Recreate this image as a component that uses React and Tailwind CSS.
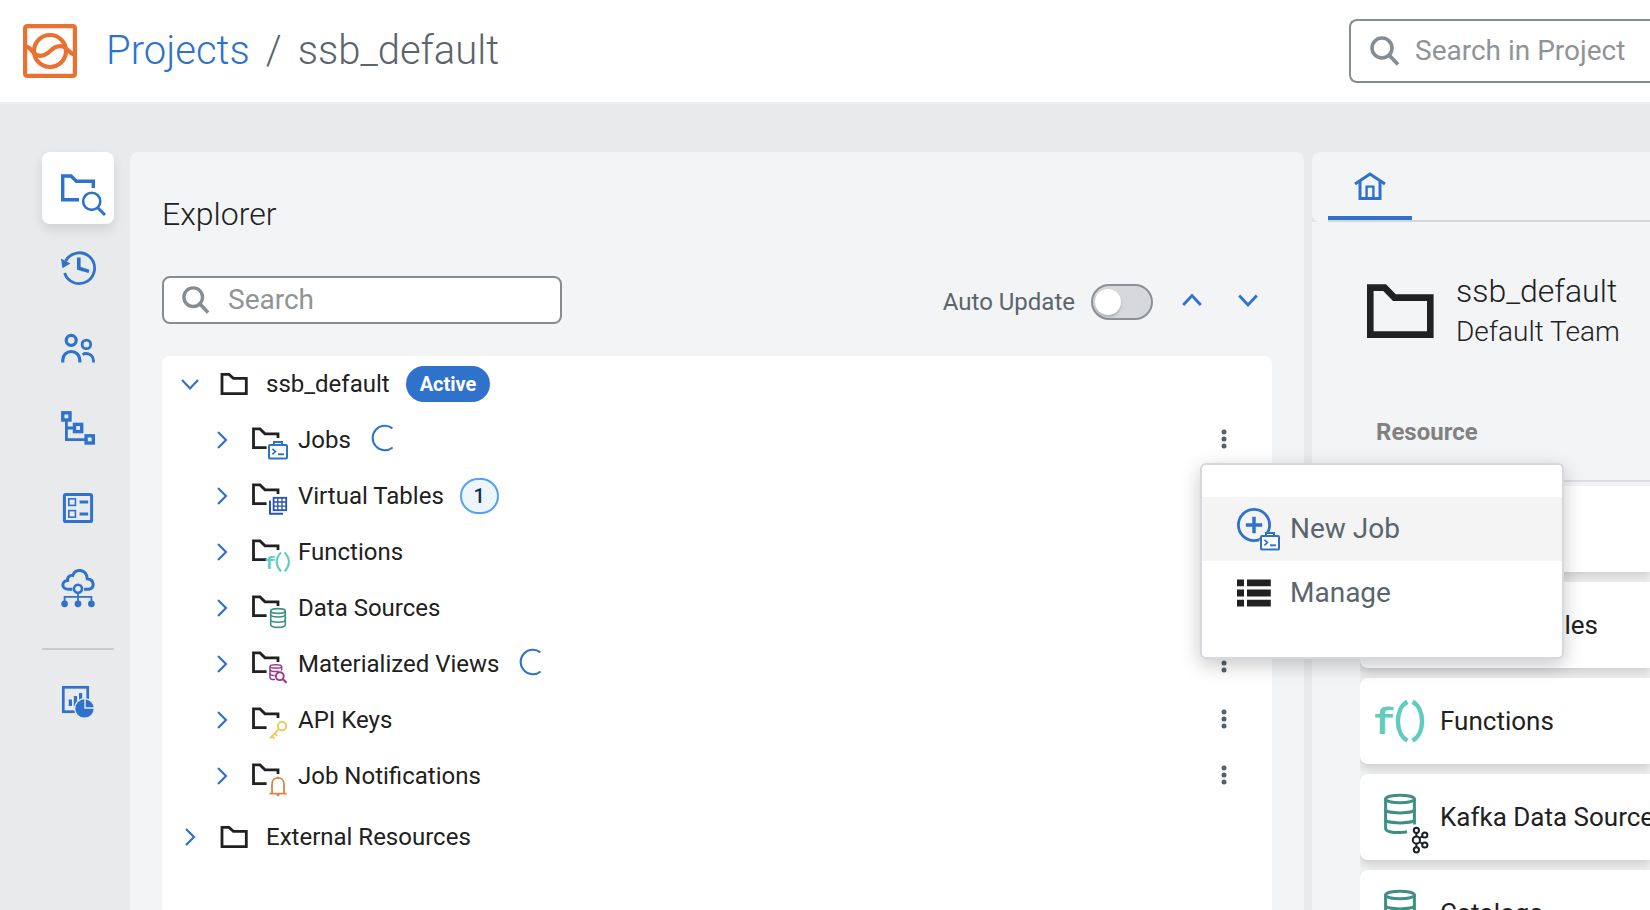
import React from "react";

const BLUE = "#2f72cc";
const INK = "#212121";

/* ---------- shared glyphs ---------- */

function SearchGlyph({ className }) {
  return (
    <svg className={className} viewBox="0 0 30 30" fill="none" stroke="#858d93" aria-hidden="true">
      <circle cx="12" cy="12" r="10" strokeWidth="3.6" />
      <path d="M19 19L28 28.5" strokeWidth="3.8" />
    </svg>
  );
}

function Chevron({ dir = "right", className = "", width = 2.2 }) {
  const d = {
    right: "M6 2L14 10L6 18",
    down: "M2 6L10 14.5L18 6",
    up: "M2 14.5L10 6L18 14.5",
  }[dir];
  return (
    <svg className={className} viewBox="0 0 20 20" fill="none" stroke={BLUE} strokeWidth={width} aria-hidden="true">
      <path d={d} />
    </svg>
  );
}

function CaseShape({ x, y }) {
  return (
    <g transform={`translate(${x} ${y})`} fill="none" stroke={BLUE} strokeWidth="2">
      <rect x="1" y="4" width="18" height="13.4" rx="1" fill="#fff" />
      <path d="M6 4V1H14V4" />
      <path d="M4.4 7.8L7.4 10.6L4.4 13.4" strokeWidth="1.7" />
      <path d="M10 13.3H16" strokeWidth="1.9" />
    </g>
  );
}

/* ---------- sidebar icons, drawn on a 72px tile ---------- */

const NAV_ICONS = {
  explorer: (
    <g fill="none" stroke={BLUE}>
      <path d="M51.3 36V29.3H34.5L29 24H20.7V47.7H37" strokeWidth="3.4" />
      <circle cx="49.7" cy="49.3" r="8.6" strokeWidth="2.6" />
      <path d="M56 56L63 63" strokeWidth="3" />
    </g>
  ),
  history: (
    <g fill="none" stroke={BLUE}>
      <path d="M22.6 41A15.4 15.4 0 1 0 23.6 29" strokeWidth="2.8" />
      <path d="M36.8 25.5V36.3L47 39.4" strokeWidth="3.6" />
      <path d="M19 26.6L28.4 31.4L20.4 36.2Z" fill={BLUE} stroke="none" />
    </g>
  ),
  team: (
    <g fill="none" stroke={BLUE}>
      <circle cx="29.2" cy="28.3" r="5" strokeWidth="3.2" />
      <path d="M20.8 50.4V48a8.5 8.5 0 0 1 17 0V50.4" strokeWidth="3.2" />
      <circle cx="44.4" cy="32.4" r="4.3" strokeWidth="2.8" />
      <path d="M40.6 42.6C41.8 41.8 43 41.5 44.3 41.5A7.2 7.2 0 0 1 51.5 48.7V50.4" strokeWidth="2.8" />
    </g>
  ),
  flow: (
    <g fill="none" stroke={BLUE} strokeWidth="3.4">
      <rect x="20.8" y="20.8" width="7.2" height="7.2" />
      <rect x="32.5" y="32.4" width="7.2" height="7.2" />
      <rect x="44.1" y="43.8" width="7.2" height="7.2" />
      <path d="M24.4 28V47.7H44M24.4 36H32" strokeWidth="2.8" />
    </g>
  ),
  list: (
    <g fill="none" stroke={BLUE}>
      <rect x="22.4" y="22.4" width="27.2" height="27.2" rx="1.4" strokeWidth="3" />
      <rect x="26.8" y="26.8" width="6.6" height="6.6" strokeWidth="1.6" />
      <rect x="26.8" y="38.6" width="6.6" height="6.6" strokeWidth="1.6" />
      <path d="M37.6 30.1H46.2M37.6 42H46.2" strokeWidth="3" />
    </g>
  ),
  cloud: (
    <g fill="none" stroke={BLUE}>
      <path
        d="M30.4 37.3H26.5C18.8 37.3 19.4 28.8 25.6 28.4C25.2 25 28 23 30.8 23.4C33 16 44.4 16.6 45.3 26.8C53 27.6 52.8 37.3 46.5 37.3H42"
        strokeWidth="3"
      />
      <circle cx="36" cy="36.7" r="4" strokeWidth="2.6" />
      <path d="M36 41V51M22.6 51V44.8H49.4V51" strokeWidth="1.8" />
      <g fill={BLUE} stroke="none">
        <circle cx="22.6" cy="51.8" r="3.4" />
        <circle cx="36" cy="51.8" r="3.4" />
        <circle cx="49.4" cy="51.8" r="3.4" />
      </g>
    </g>
  ),
  report: (
    <g>
      <rect x="21.3" y="21.3" width="24.4" height="24.4" fill="none" stroke={BLUE} strokeWidth="2.7" />
      <path d="M26.7 33.5H30V40H26.7ZM31.8 30H35.1V40H31.8ZM37 27H40.2V35H37Z" fill={BLUE} />
      <circle cx="42.5" cy="42.4" r="10.5" fill="#e9eaec" />
      <circle cx="42.5" cy="42.4" r="9.2" fill={BLUE} />
      <path d="M43 32V42H53" fill="none" stroke="#e9eaec" strokeWidth="1.4" />
    </g>
  ),
};

function NavButton({ icon, label, active }) {
  return (
    <button
      type="button"
      aria-label={label}
      className={
        active
          ? "h-[72px] w-[72px] rounded-lg bg-white shadow-[0_6px_12px_rgba(0,0,0,0.10)]"
          : "h-[72px] w-[72px] rounded-lg"
      }
    >
      <svg className="h-[72px] w-[72px]" viewBox="0 0 72 72" aria-hidden="true">
        {NAV_ICONS[icon]}
      </svg>
    </button>
  );
}

/* ---------- tree icons ---------- */

function Folder({ className }) {
  return (
    <svg className={className} viewBox="0 0 28 24" fill="none" stroke={INK} strokeWidth="2.8" aria-hidden="true">
      <path d="M2 2.4H9L13.4 6.4H26.3V21.6H2Z" />
    </svg>
  );
}

const TREE_BADGES = {
  jobs: <CaseShape x={16} y={21} />,
  tables: (
    <g fill="none" stroke="#2a52b0">
      <rect x="21.6" y="21.8" width="12.6" height="12.4" strokeWidth="1.8" />
      <path d="M25.8 22V34M30 22V34M22 26H34M22 30.2H34" strokeWidth="1.3" />
      <path d="M18 24.6V37.8H31" strokeWidth="2" />
    </g>
  ),
  functions: (
    <g fill="none" stroke="#5fccbe">
      <text x="12.5" y="37" fontFamily="Liberation Mono, monospace" fontWeight="700" fontSize="19" fill="#5fccbe" stroke="none">
        f
      </text>
      <path d="M29 20.4Q20.4 30 29 39.4M32.6 20.4Q41.2 30 32.6 39.4" strokeWidth="2.1" />
    </g>
  ),
  sources: (
    <g fill="none" stroke="#3f9083" strokeWidth="1.6">
      <ellipse cx="26" cy="23" rx="7.3" ry="2.4" />
      <path d="M18.7 23V36.8C18.7 40.2 33.3 40.2 33.3 36.8V23" />
      <path d="M18.7 26.6C18.7 29.8 33.3 29.8 33.3 26.6M18.7 31.8C18.7 35 33.3 35 33.3 31.8" />
    </g>
  ),
  views: (
    <g fill="none" stroke="#9b3a8a" strokeWidth="1.5">
      <ellipse cx="23.8" cy="22.4" rx="5.8" ry="1.7" />
      <path d="M18 22.4V33.4C18 35 20.5 35.6 23 35.6M29.6 22.4V26.5" />
      <path d="M18 25.6C18 27.6 24 28 26.6 27.2M18 29.6C18 31 20.4 31.6 22.6 31.6" />
      <circle cx="27.8" cy="32.2" r="3.9" strokeWidth="1.9" />
      <path d="M30.6 35L34.6 38.8" strokeWidth="2.2" />
    </g>
  ),
  keys: (
    <g fill="none" stroke="#f0c95c" strokeWidth="1.9">
      <circle cx="30" cy="26" r="4.2" />
      <path d="M26.8 29.2L18 38.4M19.6 36L22.4 38.6M22.4 33L25.2 35.8" />
    </g>
  ),
  bell: (
    <g fill="none" stroke="#e0813d">
      <path d="M20 37V28.3C20 19.8 32 19.8 32 28.3V37" strokeWidth="1.8" />
      <path d="M17.4 37.6H34.6" strokeWidth="1.7" />
      <circle cx="26" cy="38.8" r="1.5" fill="#e0813d" stroke="none" />
      <path d="M25 21.6H27" strokeWidth="1.6" />
    </g>
  ),
};

function TreeIcon({ kind }) {
  return (
    <svg className="h-10 w-10 shrink-0 overflow-visible" viewBox="0 0 40 40" aria-hidden="true">
      <path d="M26 18V13.8H13L8 8.9H1.5V27.7H14.6" fill="none" stroke={INK} strokeWidth="2.8" />
      {TREE_BADGES[kind]}
    </svg>
  );
}

function Spinner() {
  return (
    <svg className="-mt-1 ml-[18px] h-7 w-7 shrink-0" viewBox="0 0 28 28" fill="none" stroke={BLUE} strokeWidth="2" role="status" aria-label="Loading">
      <path d="M23.4 4.4A12.2 12.2 0 1 0 23.6 23.4" />
    </svg>
  );
}

function MoreButton({ label }) {
  return (
    <button type="button" aria-label={label} className="flex h-[46px] w-12 items-center justify-center">
      <svg className="h-6 w-3" viewBox="0 0 12 24" fill="#56606a" aria-hidden="true">
        <circle cx="6" cy="4" r="2.5" />
        <circle cx="6" cy="11" r="2.5" />
        <circle cx="6" cy="18" r="2.5" />
      </svg>
    </button>
  );
}

function JobMenu() {
  return (
    <div
      role="menu"
      className="absolute left-0 top-full z-10 w-[364px] rounded-md border-2 border-[#d6d8de] bg-white py-8 shadow-[0_6px_20px_rgba(0,0,0,0.22)]"
    >
      <button type="button" role="menuitem" className="flex h-16 w-full items-center gap-1.5 bg-[#f4f4f4] pl-[34px] text-[28px] text-[#5a656d]">
        <svg className="h-12 w-12 shrink-0 overflow-visible" viewBox="0 0 48 48" aria-hidden="true">
          <circle cx="18" cy="20" r="15.6" fill="none" stroke={BLUE} strokeWidth="2.8" />
          <path d="M18 11.8V28.2M9.8 20H26.2" stroke={BLUE} strokeWidth="3.5" />
          <circle cx="34" cy="37.3" r="10.6" fill="#fff" />
          <CaseShape x={24} y={27} />
        </svg>
        New Job
      </button>
      <button type="button" role="menuitem" className="flex h-16 w-full items-center gap-1.5 pl-[34px] text-[28px] text-[#5a656d]">
        <svg className="h-12 w-12 shrink-0" viewBox="0 0 48 48" fill={INK} aria-hidden="true">
          <path d="M1 10.4H8V17.2H1ZM11 10.4H34.8V17.2H11ZM1 20.6H8V27.4H1ZM11 20.6H34.8V27.4H11ZM1 30.7H8V37.5H1ZM11 30.7H34.8V37.5H11Z" />
        </svg>
        Manage
      </button>
    </div>
  );
}

const TREE = [
  { kind: "jobs", label: "Jobs", loading: true, menuOpen: true },
  { kind: "tables", label: "Virtual Tables", count: 1 },
  { kind: "functions", label: "Functions" },
  { kind: "sources", label: "Data Sources" },
  { kind: "views", label: "Materialized Views", loading: true },
  { kind: "keys", label: "API Keys" },
  { kind: "bell", label: "Job Notifications" },
];

function TreeRow({ item }) {
  return (
    <li className="flex h-14 items-center pl-[50px] pr-6">
      <button type="button" aria-label={`Expand ${item.label}`} className="mr-5 shrink-0">
        <Chevron className="h-5 w-5" />
      </button>
      <TreeIcon kind={item.kind} />
      <span className="ml-[6px] whitespace-nowrap">{item.label}</span>
      {item.loading && <Spinner />}
      {item.count && (
        <span className="ml-4 flex h-9 w-[39px] items-center justify-center rounded-full border-2 border-[#559ff5] bg-[#edf6ff] text-xl font-medium text-[#12304f]">
          {item.count}
        </span>
      )}
      <div className="relative ml-auto">
        <MoreButton label={`${item.label} actions`} />
        {item.menuOpen && <JobMenu />}
      </div>
    </li>
  );
}

/* ---------- resource list ---------- */

function Database() {
  return (
    <g fill="none" stroke="#3f9083" strokeWidth="3">
      <ellipse cx="24" cy="18" rx="14.4" ry="3.8" />
      <path d="M9.6 18V47.5C9.6 50.4 16 51.8 24 51.6C26.6 51.5 28.6 51.4 31 50.8" />
      <path d="M38.4 18V43.5" />
      <path d="M9.6 28.5C9.6 33 38.4 33 38.4 28.5M9.6 38.5C9.6 43 38.4 43 38.4 38.5" />
    </g>
  );
}

const RESOURCE_ICONS = {
  jobs: (
    <g transform="translate(4 16) scale(2)">
      <CaseShape x={0} y={0} />
    </g>
  ),
  tables: (
    <g fill="none" stroke="#2a52b0">
      <rect x="14" y="20" width="26" height="26" strokeWidth="3" />
      <path d="M23 20V46M31 20V46M14 29H40M14 37H40" strokeWidth="2" />
      <path d="M8 26V52H34" strokeWidth="3" />
    </g>
  ),
  functions: (
    <g fill="none" stroke="#5fccbe">
      <text x="-3" y="49" fontFamily="Liberation Mono, monospace" fontWeight="700" fontSize="37" fill="#5fccbe" stroke="none">
        f
      </text>
      <path d="M31.4 16.8C18.8 23.6 18.8 48.8 31.4 55.6M36.6 16.8C49.2 23.6 49.2 48.8 36.6 55.6" strokeWidth="4.4" />
    </g>
  ),
  kafka: (
    <g>
      <Database />
      <g fill="#fff" stroke="#1b2026" strokeWidth="2">
        <path d="M40.4 51V66M40.4 59L48.4 54M40.4 59L48.4 64" />
        <circle cx="40.4" cy="49.3" r="2.6" />
        <circle cx="40.4" cy="59" r="3.6" />
        <circle cx="40.4" cy="68.8" r="2.6" />
        <circle cx="48.8" cy="54" r="2.6" />
        <circle cx="48.8" cy="64" r="2.6" />
      </g>
    </g>
  ),
  catalogs: <Database />,
};

const RESOURCES = [
  { icon: "jobs", label: "Jobs" },
  { icon: "tables", label: "Virtual Tables" },
  { icon: "functions", label: "Functions" },
  { icon: "kafka", label: "Kafka Data Sources" },
  { icon: "catalogs", label: "Catalogs" },
];

export default function App() {
  return (
    <div className="flex h-screen flex-col overflow-hidden bg-[#e9eaec] font-['Roboto',sans-serif] text-2xl text-[#212121]">
      <header className="flex shrink-0 items-center justify-between border-b-2 border-[#f0f1f3] bg-white pb-[19px] pl-[23px] pt-[19px]">
        <div className="flex items-center">
          <svg className="h-[54px] w-[54px] shrink-0" viewBox="0 0 54 54" fill="none" stroke="#ea7130" aria-hidden="true">
            <rect x="2.1" y="2.1" width="49.8" height="49.8" rx="2" strokeWidth="4.2" />
            <circle cx="27" cy="27" r="16" strokeWidth="4.2" />
            <path
              d="M3 22.6C6.5 23 8 25.6 10.4 28.4C14 32.6 20 33 24.6 29.2C29 25.4 32.6 21.2 38.8 22.2C44.6 23.2 45.6 29 51 30.6"
              strokeWidth="4.2"
            />
          </svg>
          <nav aria-label="Breadcrumb" className="ml-[29px] flex gap-4 whitespace-nowrap text-[40px] font-light leading-[48px] text-[#5a656d]">
            <a href="#projects" className="text-[#2f72cc]">Projects</a>
            <span>/</span>
            <span>ssb_default</span>
          </nav>
        </div>
        <label className="flex h-16 w-[301px] items-center gap-[15px] rounded-l-lg border-2 border-r-0 border-[#858d93] bg-white pl-[19px]">
          <SearchGlyph className="h-[30px] w-[30px] shrink-0" />
          <input
            type="text"
            aria-label="Search in Project"
            placeholder="Search in Project"
            className="min-w-0 flex-1 text-[28px] outline-none placeholder:text-[#8f9498]"
          />
        </label>
      </header>

      <main className="flex min-h-0 flex-1 pl-[42px] pt-12">
        <nav aria-label="Tools" className="mr-4 flex w-[72px] shrink-0 flex-col gap-2">
          <NavButton icon="explorer" label="Explorer" active />
          <NavButton icon="history" label="History" />
          <NavButton icon="team" label="Team" />
          <NavButton icon="flow" label="Flow" />
          <NavButton icon="list" label="Templates" />
          <NavButton icon="cloud" label="Connections" />
          <hr className="mb-2 mt-4 border-t-2 border-[#cbccd0]" />
          <NavButton icon="report" label="Reports" />
        </nav>

        <div className="grid min-w-0 flex-1 grid-cols-[minmax(0,1174fr)_minmax(0,338fr)] gap-2">
          <section className="z-10 flex min-h-0 flex-col rounded-t-lg bg-[#f3f4f6] px-8 pt-10">
            <h1 className="text-[32px] font-light leading-[44px]">Explorer</h1>
            <div className="mt-10 flex h-12 items-center">
              <label className="flex h-12 w-[400px] items-center gap-[18px] rounded-lg border-2 border-[#858d93] bg-white pl-[18px]">
                <SearchGlyph className="h-7 w-7 shrink-0" />
                <input
                  type="text"
                  aria-label="Search"
                  placeholder="Search"
                  className="min-w-0 flex-1 text-[28px] leading-10 outline-none placeholder:text-[#8f9498]"
                />
              </label>
              <label className="ml-auto flex items-center gap-4 pt-1 text-[#5a656d]">
                Auto Update
                <input
                  type="checkbox"
                  role="switch"
                  className="h-9 w-[62px] appearance-none rounded-full border-2 border-[#8b9196] bg-[#d7d8dc] px-[2px] py-[3px] before:block before:h-[26px] before:w-[26px] before:rounded-full before:bg-white before:shadow-[0_2px_3px_rgba(0,0,0,0.2)] before:content-['']"
                />
              </label>
              <button type="button" aria-label="Collapse all" className="ml-[27px] p-px">
                <Chevron dir="up" className="h-[22px] w-[22px]" width={2.6} />
              </button>
              <button type="button" aria-label="Expand all" className="ml-8 mr-3 p-px">
                <Chevron dir="down" className="h-[22px] w-[22px]" width={2.6} />
              </button>
            </div>

            <div className="mt-8 flex-1 rounded-t-lg bg-white">
              <div className="flex h-14 items-center pl-[18px]">
                <button type="button" aria-label="Collapse ssb_default" className="mr-5 shrink-0">
                  <Chevron dir="down" className="h-5 w-5" />
                </button>
                <Folder className="h-6 w-7 shrink-0" />
                <span className="ml-[18px]">ssb_default</span>
                <span className="ml-4 flex h-9 items-center rounded-full bg-[#2f72cc] px-[14px] text-xl font-bold text-white">Active</span>
              </div>
              <ul>
                {TREE.map((item) => (
                  <TreeRow key={item.kind} item={item} />
                ))}
              </ul>
              <div className="mt-[5px] flex h-14 items-center pl-[18px]">
                <button type="button" aria-label="Expand External Resources" className="mr-5 shrink-0">
                  <Chevron className="h-5 w-5" />
                </button>
                <Folder className="h-6 w-7 shrink-0" />
                <span className="ml-[18px]">External Resources</span>
              </div>
            </div>
          </section>

          <section className="flex min-h-0 flex-col overflow-hidden rounded-tl-lg bg-[#f3f4f6]">
            <div className="shrink-0 bg-[#e3e4e6]">
              <div role="tablist" className="rounded-l-lg bg-[#f3f4f6] pl-4">
                <div className="border-b-2 border-[#d5d6d9]">
                  <button
                    type="button"
                    role="tab"
                    aria-selected="true"
                    aria-label="Home"
                    className="flex h-[68px] w-[84px] items-center justify-center border-b-4 border-[#2f72cc]"
                  >
                    <svg className="h-9 w-8" viewBox="0 0 32 36" fill="none" stroke={BLUE} aria-hidden="true">
                      <path d="M1 18L16 8L31 18" strokeWidth="3" />
                      <path d="M6 15.4V32.5H26V15.4" strokeWidth="3" />
                      <path d="M12.6 32.5V20.6H19.4V32.5" strokeWidth="2.4" />
                    </svg>
                  </button>
                </div>
              </div>
            </div>

            <div className="flex shrink-0 items-center gap-[22px] pl-[54px] pt-12">
              <svg className="h-14 w-[68px] shrink-0" viewBox="0 0 68 56" fill="none" stroke={INK} strokeWidth="6.6" aria-hidden="true">
                <path d="M4.3 4.6H18.6L28.4 14.6H64.3V51.6H4.3Z" />
              </svg>
              <div className="whitespace-nowrap font-light">
                <h2 className="text-[32px] leading-[42px]">ssb_default</h2>
                <p className="text-[28px] leading-10">Default Team</p>
              </div>
            </div>

            <div className="ml-12 shrink-0 border-b-2 border-[#dddee1] pb-8 pl-4 pt-16">
              <h3 className="font-bold leading-8 text-[#818181]">Resource</h3>
            </div>

            <ul className="ml-12 mt-1 flex shrink-0 flex-col gap-[10px] overflow-hidden bg-[#eff0f2]">
              {RESOURCES.map((item) => (
                <li key={item.icon} className="flex h-[86px] items-center gap-4 rounded-l-lg bg-white pl-4 text-[26px] shadow-[0_5px_8px_rgba(0,0,0,0.13)]">
                  <svg className="h-[72px] w-12 shrink-0 overflow-visible" viewBox="0 0 48 72" aria-hidden="true">
                    {RESOURCE_ICONS[item.icon]}
                  </svg>
                  <span className="whitespace-nowrap">{item.label}</span>
                </li>
              ))}
            </ul>
          </section>
        </div>
      </main>
    </div>
  );
}
